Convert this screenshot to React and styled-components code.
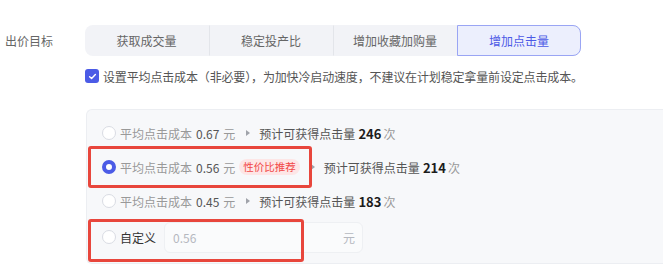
import React, { useState } from 'react';
import styled, { createGlobalStyle } from 'styled-components';

const GlobalStyle = createGlobalStyle`
    body {
        margin: 0;
        background: #fff;
        overflow: hidden;
        font-family: "Noto Sans CJK SC", "Noto Sans", sans-serif;
        font-size: 12px;
        color: #666;
    }
`;

const Page = styled.div`
    display: grid;
    grid-template-columns: 80px 1fr;
    padding: 25px 0 0 5px;
    width: 658px;
    overflow: hidden;
`;

const Label = styled.div`
    height: 31px;
    line-height: 31px;
    color: #666;
    font-size: 12px;
`;

const Content = styled.div`
    display: flex;
    flex-direction: column;
`;

const Segments = styled.div`
    display: flex;
    width: 496px;
    height: 31px;
    background: #f2f3f7;
    border-radius: 8px;
`;

const Segment = styled.div`
    box-sizing: border-box;
    width: 124px;
    display: flex;
    align-items: center;
    justify-content: center;
    font-size: 12px;
    color: ${p => (p.$active ? '#4c5ae6' : '#666')};
    background: ${p => (p.$active ? '#eceffd' : 'transparent')};
    border: 1px solid ${p => (p.$active ? '#9aa5f4' : 'transparent')};
    border-left: ${p => (p.$active ? '1px solid #9aa5f4' : p.$first ? 'none' : '1px solid #e3e5ea')};
    border-radius: ${p => (p.$active ? '0 8px 8px 0' : '0')};
`;

const CheckRow = styled.label`
    display: flex;
    align-items: center;
    gap: 4px;
    margin-top: 13px;
    color: #555;
    height: 14px;
    letter-spacing: -0.15px;
`;

const CheckBox = styled.span`
    width: 14px;
    height: 14px;
    border-radius: 3px;
    background: #4b5be6;
    display: flex;
    align-items: center;
    justify-content: center;
`;

const Panel = styled.div`
    position: relative;
    margin-top: 26px;
    margin-left: 1px;
    width: 590px;
    box-sizing: border-box;
    background: #f7f8fa;
    border: 1px solid #eceef2;
    border-right: none;
    border-radius: 6px 0 0 6px;
    padding: 6px 0 8px 15px;
    display: flex;
    flex-direction: column;
`;

const Row = styled.div`
    position: relative;
    display: flex;
    align-items: center;
    height: ${p => (p.$tall ? '36px' : '34px')};
    margin-top: ${p => (p.$tall ? '1px' : '0')};
`;

const Radio = styled.span`
    box-sizing: border-box;
    width: 14px;
    height: 14px;
    border-radius: 50%;
    background: #fff;
    border: ${p => (p.$checked ? '4px solid #4b5be6' : '1px solid #d9dce3')};
    margin-right: 4px;
    flex-shrink: 0;
`;

const Muted = styled.span`
    color: #999;
`;

const Value = styled.span`
    color: #555;
    margin: 0 4px;
`;

const Arrow = styled.span`
    width: 0;
    height: 0;
    border-top: 3.5px solid transparent;
    border-bottom: 3.5px solid transparent;
    border-left: 4px solid #a0a3aa;
    margin: 0 9px 0 11px;
`;

const Estimate = styled.span`
    color: #555;
`;

const Count = styled.b`
    color: #1c1c1c;
    font-size: 13px;
    margin: 0 2px 0 3px;
`;

const Tag = styled.span`
    height: 16px;
    line-height: 16px;
    padding: 0 4px;
    border-radius: 8px;
    background: #fde6e6;
    color: #f24848;
    font-size: 10.5px;
    margin-left: 4px;
`;

const CustomLabel = styled.span`
    color: #333;
    margin-right: 8px;
`;

const Input = styled.div`
    box-sizing: border-box;
    width: 199px;
    height: 31px;
    border: 1px solid #eef0f3;
    border-radius: 6px;
    background: #fafbfc;
    display: flex;
    align-items: center;
    justify-content: space-between;
    padding: 0 7px 0 8px;
    color: #b5b8bf;
`;

const Highlight = styled.span`
    position: absolute;
    left: -14px;
    top: ${p => p.$top}px;
    width: ${p => p.$w}px;
    height: ${p => p.$h}px;
    box-sizing: border-box;
    border: 3px solid #e8463c;
    border-radius: 3px;
    pointer-events: none;
`;

const options = [
    { cost: '0.67', clicks: 246 },
    { cost: '0.56', clicks: 214, tag: '性价比推荐' },
    { cost: '0.45', clicks: 183 },
];

const tabs = ['获取成交量', '稳定投产比', '增加收藏加购量', '增加点击量'];

const App = () => {
    const [active] = useState(3);
    const [selected] = useState(1);

    return (
        <>
            <GlobalStyle />
            <Page>
                <Label>出价目标</Label>
                <Content>
                    <Segments>
                        {tabs.map((t, i) => (
                            <Segment key={t} $first={i === 0} $active={i === active}>{t}</Segment>
                        ))}
                    </Segments>
                    <CheckRow>
                        <CheckBox>
                            <svg width="9" height="9" viewBox="0 0 10 10">
                                <path d="M1.8 5.2 L4 7.2 L8.2 2.8" fill="none" stroke="#fff" strokeWidth="1.6" strokeLinecap="round" strokeLinejoin="round" />
                            </svg>
                        </CheckBox>
                        设置平均点击成本（非必要），为加快冷启动速度，不建议在计划稳定拿量前设定点击成本。
                    </CheckRow>
                    <Panel>
                        {options.map((o, i) => (
                            <Row key={o.cost}>
                                <Radio $checked={i === selected} />
                                <Muted>平均点击成本</Muted>
                                <Value>{o.cost}</Value>
                                <Muted>元</Muted>
                                {o.tag && <Tag>{o.tag}</Tag>}
                                <Arrow />
                                <Estimate>预计可获得点击量</Estimate>
                                <Count>{o.clicks}</Count>
                                <Muted>次</Muted>
                                {i === 1 && <Highlight $top={-4} $w={224} $h={42} />}
                            </Row>
                        ))}
                        <Row $tall>
                            <Radio />
                            <CustomLabel>自定义</CustomLabel>
                            <Input>
                                <span>0.56</span>
                                <span>元</span>
                            </Input>
                            <Highlight $top={0} $w={216} $h={43} />
                        </Row>
                    </Panel>
                </Content>
            </Page>
        </>
    );
};

export default App;
